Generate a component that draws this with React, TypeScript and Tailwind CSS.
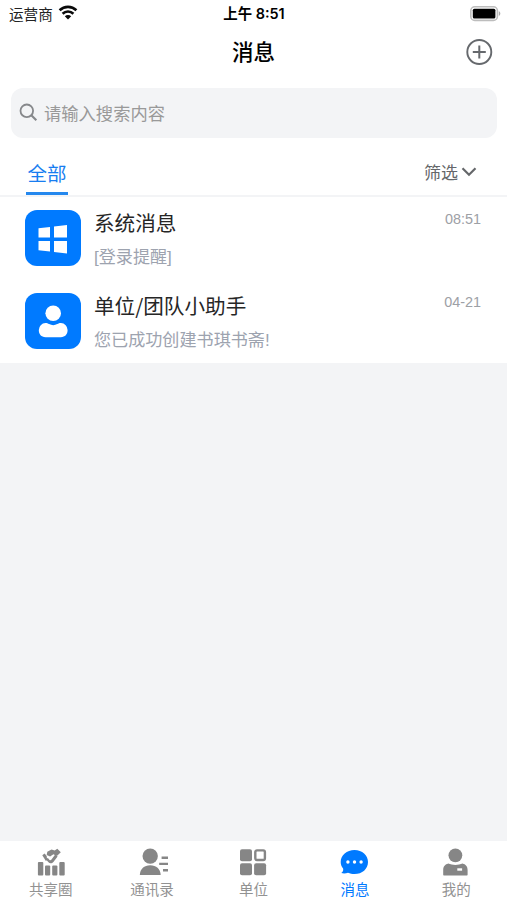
import type { ReactNode } from "react";

const Wifi = () => (
  <svg width="20" height="15" viewBox="0 0 20 15" className="mb-[2px] ml-[5px]" fill="none" stroke="#0a0a0a" strokeWidth="2.6">
    <path d="M1.6 5.3a12 12 0 0 1 16.8 0" />
    <path d="M4.6 8.7a7.7 7.700 0 0 1 10.8 0" />
    <path d="M6.800 11.300a4.500 4.500 0 0 1 6.400 0L10 14.500z" fill="#0a0a0a" stroke="none" />
  </svg>
);

const Battery = () => (
  <svg width="31" height="16" viewBox="0 0 31 16">
    <rect x="0.8" y="0.8" width="26.6" height="13.6" rx="4" fill="#fff" stroke="#bdbdbd" strokeWidth="1.6" />
    <rect x="2.8" y="2.8" width="22.6" height="9.8" rx="1.5" fill="#000" />
    <path d="M28.8 5.3c2 .7 2 3.9 0 4.6z" fill="#aaa" />
  </svg>
);

const WindowsLogo = () => (
  <svg width="56" height="56" viewBox="0 0 56 56" fill="#fff">
    <path d="M13.5 18.2 25 16.9V27.4H13.5zM29 16.4 42 15V27.4H29zM13.5 31.1H25V41.6L13.5 40.2zM29 31.1H42V43.6L29 42.1z" />
  </svg>
);

const UserLogo = () => (
  <svg width="56" height="56" viewBox="0 0 56 56" fill="#fff">
    <circle cx="28.2" cy="20.3" r="7.8" />
    <path d="M20.5 30.1c1.4 0 2.5.5 3.6 1a9 9 0 0 0 8.2 0c1.1-.5 2.2-1 3.6-1a7 7 0 0 1 6.7 7c0 4.200-2.400 7.100-6.800 7.100H20.600c-4.400 0-6.800-2.900-6.800-7.100a7 7 0 0 1 6.700-7z" />
  </svg>
);

const ShareIcon = () => (
  <svg width="32" height="30" viewBox="0 0 32 30" fill="#868686">
    <rect x="2.900" y="14" width="5.400" height="13.500" rx="1" />
    <rect x="10" y="17.500" width="5.200" height="10" rx="1" />
    <rect x="17.200" y="17.500" width="5.200" height="10" rx="1" />
    <rect x="24.300" y="14" width="5.400" height="13.500" rx="1" />
    <path d="m7.300 7.300 2.300-1.700 2.100 2.300.4 4.100-1.200 1z" />
    <path d="m12.300 3.700 4.200-2.200 3.200.9L22.300.7l3.500 3.500-3.900 3.700-3.500-1.700-3.300 2.400-3.400-1.700z" />
    <path d="m10.700 10.900 2.500 3.200c1.700 1.800 3.900 1.300 5.200-.2l4.200-5.400-2.400-2-3.900 5.300c-.5.600-1.200.6-1.800.1l-1.600-1.800z" />
  </svg>
);

const ContactsIcon = () => (
  <svg width="32" height="30" viewBox="0 0 32 30" fill="#868686">
    <circle cx="14.200" cy="8.100" r="7.700" />
    <path d="M3.800 27c.4-6.200 4.300-9.700 10.400-9.700S24.300 20.800 24.700 27z" />
    <path d="M25.600 8.400H32V11h-6.400zM23.200 14.700H32v2.400h-8.800zM27 21h5v2.400h-5z" />
  </svg>
);

const UnitIcon = () => (
  <svg width="32" height="30" viewBox="0 0 32 30" fill="#868686">
    <rect x="3" y="1.200" width="12" height="12" rx="2" />
    <rect x="18.300" y="2.400" width="9.600" height="9.600" rx="1.700" fill="none" stroke="#868686" strokeWidth="2.400" />
    <rect x="3" y="15.200" width="12" height="12" rx="2" />
    <rect x="17.100" y="15.200" width="12" height="12" rx="2" />
  </svg>
);

const MessageIcon = () => (
  <svg width="32" height="30" viewBox="0 0 32 30" fill="#007aff">
    <path d="M15.500 1.900c7.700 0 13.500 5.100 13.500 12s-5.800 12.100-13.500 12.100c-2.300 0-4.500-.4-6.500-1.300-2.100.9-4.500 1-6.700.4 1.700-1.300 2.200-2.800 1.800-4.500C2.500 18.600 1.700 16.600 1.700 14c0-6.900 6.100-12.100 13.800-12.100z" />
    <circle cx="8.900" cy="14" r="1.700" fill="#fff" />
    <circle cx="15.500" cy="14" r="1.700" fill="#fff" />
    <circle cx="22.100" cy="14" r="1.700" fill="#fff" />
  </svg>
);

const MineIcon = () => (
  <svg width="32" height="30" viewBox="0 0 32 30" fill="#868686">
    <circle cx="15.400" cy="7.300" r="6.900" />
    <path d="M3.200 26.500v-4.300c0-4 2-5.700 5-6.600 2.200.9 4.500 1.300 7.200 1.300s5-.4 7.200-1.300c3 .9 5 2.600 5 6.600v4.300c0 .7-.3 1-1 1H4.200c-.7 0-1-.3-1-1z" />
    <rect x="17.300" y="20.300" width="4.800" height="2.400" fill="#fff" />
  </svg>
);

interface MessageProps {
  icon: ReactNode;
  title: string;
  text: string;
  time: string;
}

const Message = ({ icon, title, text, time }: MessageProps) => (
  <div className="flex h-[83px] shrink-0 pt-[13px] pr-[26px] pl-[25px]">
    <div className="size-[56px] shrink-0 rounded-[12px] bg-[#007aff]">{icon}</div>
    <div className="ml-[13px] flex-1 whitespace-nowrap">
      <div className="-mt-px text-[20.600px] leading-[26px] text-[#262626]">{title}</div>
      <div className="mt-[10px] font-['Liberation_Sans','Noto_Sans_CJK_SC',sans-serif] text-[17.100px] leading-[25px] text-[#9da3af]">{text}</div>
    </div>
    <div className="h-[20px] font-['Liberation_Sans',sans-serif] text-[14.400px] leading-[19px] text-[#9da0a5]">{time}</div>
  </div>
);

const tabs = [
  { label: "共享圈", icon: <ShareIcon /> },
  { label: "通讯录", icon: <ContactsIcon /> },
  { label: "单位", icon: <UnitIcon /> },
  { label: "消息", icon: <MessageIcon />, active: true },
  { label: "我的", icon: <MineIcon /> },
];

export default function App() {
  return (
    <div className="flex h-[900px] w-[507px] flex-col overflow-hidden bg-[#f3f4f6] font-['Noto_Sans_CJK_SC',sans-serif]">
      <div className="flex h-[197px] shrink-0 flex-col border-b-2 border-[#f3f4f6] bg-white">
        <div className="grid h-[27px] shrink-0 grid-cols-3 items-center pr-[6px] pl-[9px] text-[14.600px] leading-[20px] text-[#222]">
          <div className="flex items-center">运营商<Wifi /></div>
          <div className="pr-[2px] text-center font-['Inter','Noto_Sans_CJK_SC',sans-serif] text-[14.400px] font-semibold whitespace-nowrap text-black">上午 8:51</div>
          <div className="flex justify-end"><Battery /></div>
        </div>
        <div className="grid h-[50px] shrink-0 grid-cols-3 items-center px-[14px]">
          <span />
          <h1 className="-mt-[2px] text-center text-[21.500px] leading-[30px] font-medium text-black">消息</h1>
          <svg width="28" height="28" viewBox="0 0 28 28" className="justify-self-end" fill="none" stroke="#66696d" strokeWidth="1.900">
            <circle cx="14.300" cy="14" r="12" />
            <path d="M14.300 7.500v13M7.800 14h13" strokeWidth="2" />
          </svg>
        </div>
        <div className="mr-[10px] ml-[11px] mt-[11px] flex h-[50px] shrink-0 items-center rounded-[12px] bg-[#f3f4f6] pl-[8px] text-[17.300px] text-[#999]">
          <svg width="19" height="19" viewBox="0 0 19 19" className="mr-[6px] mb-px" fill="none" stroke="#86888b" strokeWidth="1.800">
            <circle cx="7.800" cy="7.800" r="6.300" />
            <path d="m12.300 12.300 5 5" strokeWidth="2.100" />
          </svg>
          请输入搜索内容
        </div>
        <div className="flex flex-1 items-stretch justify-between pr-[30px] pl-[26px]">
          <div className="flex h-[57px] w-[42px] items-center justify-center border-b-3 border-[#2588ee] pt-[15px] text-[19.500px] leading-[28px] whitespace-nowrap text-[#187df0]">全部</div>
          <div className="flex h-[57px] items-center pt-[11px] text-[17px] leading-[24px] text-[#65676a]">
            筛选
            <svg width="16" height="12" viewBox="0 0 16 12" className="ml-[3px]" fill="none" stroke="#65676a" strokeWidth="2.200">
              <path d="m1.500 2.300 6.500 6.400 6.500-6.400" />
            </svg>
          </div>
        </div>
      </div>
      <main className="flex h-[166px] shrink-0 flex-col bg-white">
        <Message icon={<WindowsLogo />} title="系统消息" text="[登录提醒]" time="08:51" />
        <Message icon={<UserLogo />} title="单位/团队小助手" text="您已成功创建书琪书斋!" time="04-21" />
      </main>
      <nav className="mt-auto grid h-[59px] shrink-0 grid-cols-5 bg-white">
        {tabs.map((tab) => (
          <div
            key={tab.label}
            className={`flex flex-col items-center pt-[7px] text-[14.500px] leading-[20px] ${tab.active ? "text-[#007aff]" : "text-[#929292]"}`}
          >
            {tab.icon}
            <span className="mt-px">{tab.label}</span>
          </div>
        ))}
      </nav>
    </div>
  );
}
